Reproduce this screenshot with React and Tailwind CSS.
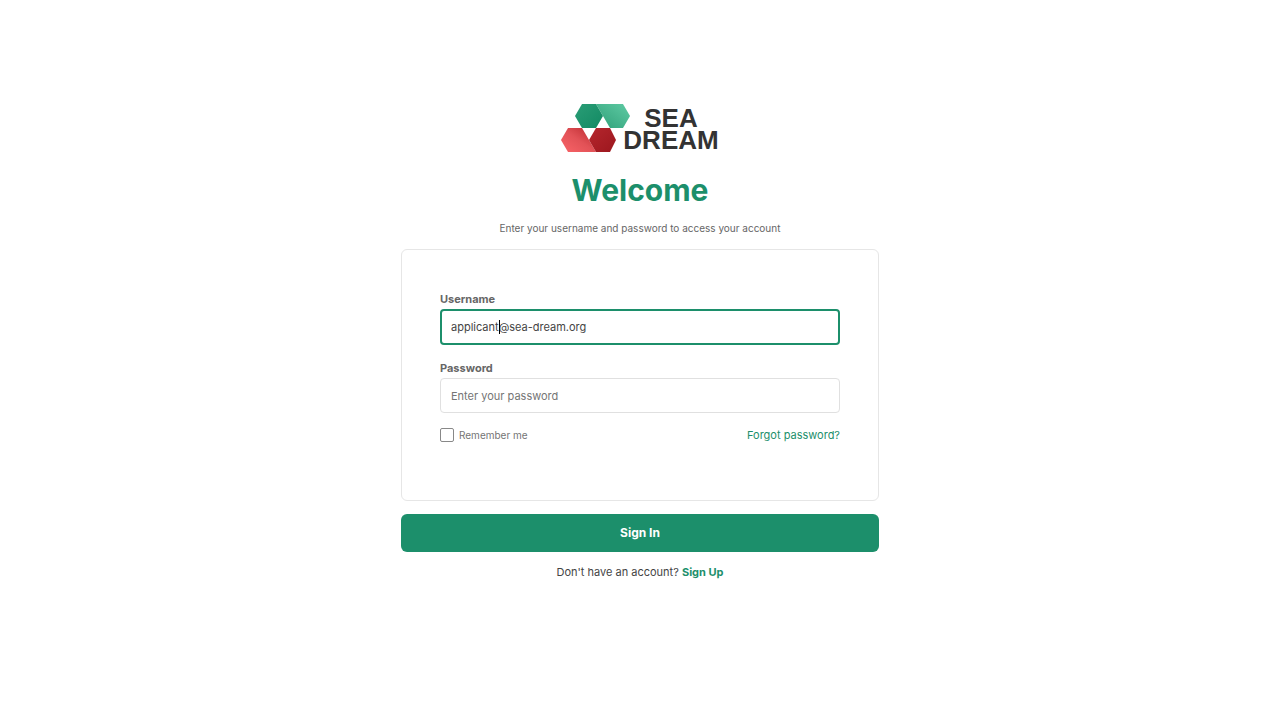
import React, { useState } from 'react';

function Logo() {
  return (
    <div className="flex items-start" role="img" aria-label="Sea Dream">
      <svg width="70" height="50" viewBox="0 0 70 50" aria-hidden="true">
        <defs>
          <linearGradient id="greenDark" x1="0" y1="0" x2="1" y2="1">
            <stop offset="0" stopColor="#2a9d76" />
            <stop offset="1" stopColor="#128a63" />
          </linearGradient>
          <linearGradient id="greenLight" x1="0" y1="1" x2="1" y2="0">
            <stop offset="0" stopColor="#2f9f78" />
            <stop offset="1" stopColor="#5fcba4" />
          </linearGradient>
          <linearGradient id="redLight" x1="0" y1="1" x2="1" y2="0">
            <stop offset="0" stopColor="#f96468" />
            <stop offset="0.5" stopColor="#e25257" />
            <stop offset="1" stopColor="#b8262c" />
          </linearGradient>
          <linearGradient id="redDark" x1="0" y1="0" x2="1" y2="1">
            <stop offset="0" stopColor="#b5262d" />
            <stop offset="1" stopColor="#9c171e" />
          </linearGradient>
        </defs>
        <path d="M35 0H62L69 12L62 24H49L42 12Z" fill="url(#greenLight)" />
        <path d="M21 0H35L42 12L35 24H21L14 12Z" fill="url(#greenDark)" />
        <path d="M7 24H21L28 36L35 48H7L0 36Z" fill="url(#redLight)" />
        <path d="M35 24H49L55 36L49 48H35L28 36Z" fill="url(#redDark)" />
      </svg>
      <div className="-ml-2 flex flex-col items-center pt-[3px] font-['Liberation_Sans',sans-serif] text-[26px] leading-[22px] font-bold text-[#333333]">
        <span>SEA</span>
        <span>DREAM</span>
      </div>
    </div>
  );
}

export default function App() {
  const [username, setUsername] = useState('applicant@sea-dream.org');
  const [password, setPassword] = useState('');
  const [remember, setRemember] = useState(false);

  const handleSubmit = (e) => {
    e.preventDefault();
  };

  return (
    <main className="flex min-h-screen flex-col items-center bg-white px-4 pt-26 pb-8 font-[Inter,sans-serif] text-[#444444]">
      <Logo />

      {/* Heading */}
      <h1 className="mt-4 text-[30px] leading-10 font-bold text-[#1c8f6b]">Welcome</h1>
      <p className="mt-[10px] text-[10px] leading-4 text-[#666666]">
        Enter your username and password to access your account
      </p>

      <form onSubmit={handleSubmit} className="mt-[13px] w-full max-w-[478px]">
        {/* Credentials */}
        <div className="rounded-md border border-[#e6e6e6] px-[38px] pt-[39px] pb-[55px]">
          <label htmlFor="username" className="block text-[11px] leading-5 font-bold text-[#666666]">
            Username
          </label>
          <div className="relative">
            <input
              id="username"
              type="text"
              value={username}
              onChange={(e) => setUsername(e.target.value)}
              className="block h-9 w-full rounded border-2 border-[#1c8f6b] px-[9px] text-[11px] text-[#444444] outline-none"
            />
            {/* Text cursor */}
            <span className="pointer-events-none absolute inset-y-0 left-[11px] flex items-center text-[11px]" aria-hidden="true">
              <span className="invisible">applicant</span>
              <span className="h-[14px] w-px bg-black" />
            </span>
          </div>

          <label htmlFor="password" className="mt-[13px] block text-[11px] leading-5 font-bold text-[#666666]">
            Password
          </label>
          <input
            id="password"
            type="password"
            value={password}
            placeholder="Enter your password"
            onChange={(e) => setPassword(e.target.value)}
            className="block h-[35px] w-full rounded border border-[#e0e0e0] px-[10px] text-[11px] outline-none placeholder:text-[#757575]"
          />

          <div className="mt-3 flex items-center justify-between">
            <label className="flex items-center gap-[5px] text-[10px] leading-5 text-[#757575]">
              <input
                type="checkbox"
                checked={remember}
                onChange={(e) => setRemember(e.target.checked)}
                className="size-[14px] appearance-none rounded-xs border border-[#888888] checked:bg-[#1c8f6b]"
              />
              Remember me
            </label>
            <a href="#forgot" className="text-[11px] leading-5 text-[#1c8f6b]">
              Forgot password?
            </a>
          </div>
        </div>

        <button type="submit" className="mt-[13px] block h-[38px] w-full rounded-md bg-[#1c8f6b] text-xs font-bold text-white">
          Sign In
        </button>
      </form>

      <p className="mt-3 text-[11px] leading-4">
        Don't have an account?{' '}
        <a href="#signup" className="font-bold text-[#1c8f6b]">
          Sign Up
        </a>
      </p>
    </main>
  );
}
